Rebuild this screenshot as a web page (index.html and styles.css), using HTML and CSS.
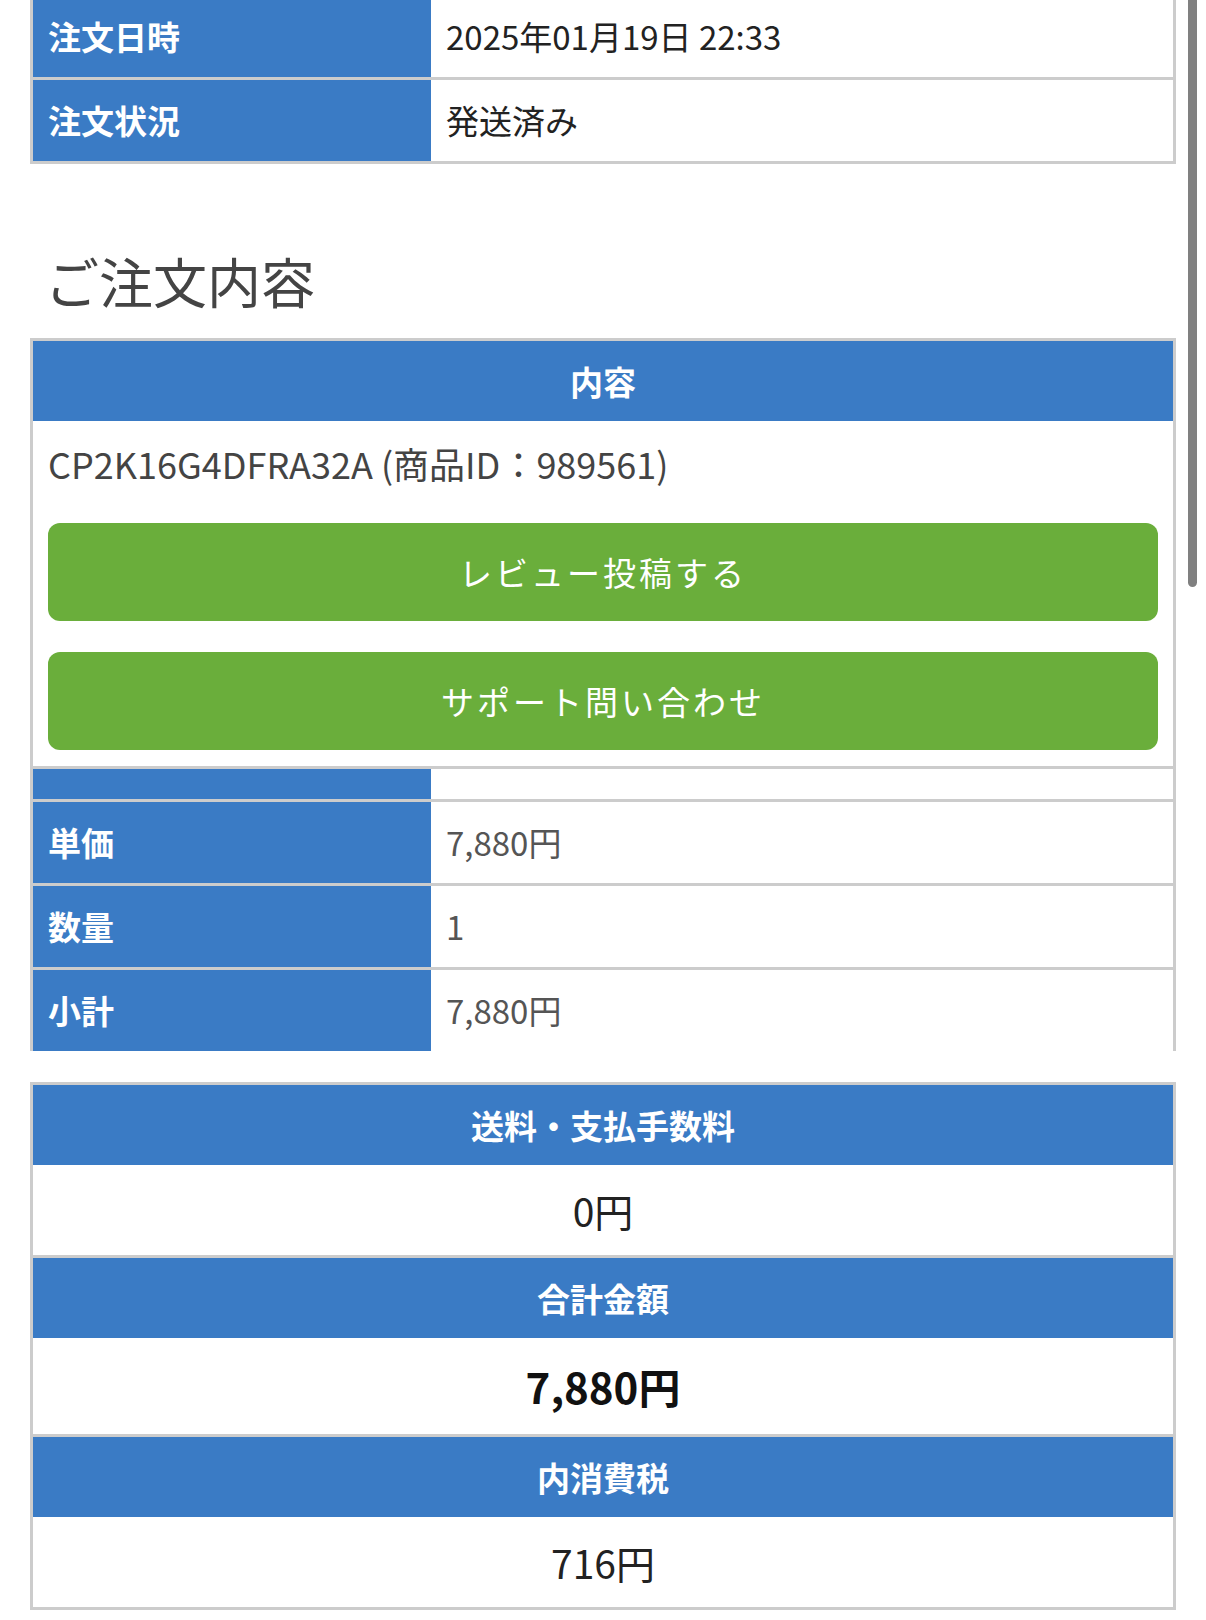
FILE: index.html
```html
<!DOCTYPE html>
<html lang="ja">
<head>
<meta charset="utf-8">
<title>ご注文内容</title>
<link rel="stylesheet" href="styles.css">
</head>
<body>
<div class="page">
  <div class="tbl">
    <div class="row">
      <div class="lbl">注文日時</div>
      <div class="val dark">2025年01月19日 22:33</div>
    </div>
    <div class="row sep">
      <div class="lbl">注文状況</div>
      <div class="val dark">発送済み</div>
    </div>
  </div>

  <h2 class="heading">ご注文内容</h2>

  <div class="tbl tbl-open">
    <div class="head">内容</div>
    <div class="content">
      <p class="product">CP2K16G4DFRA32A (商品ID：989561)</p>
      <a class="btn">レビュー投稿する</a>
      <a class="btn">サポート問い合わせ</a>
    </div>
    <div class="row sep">
      <div class="lbl"></div>
      <div class="val"></div>
    </div>
    <div class="row sep">
      <div class="lbl">単価</div>
      <div class="val">7,880円</div>
    </div>
    <div class="row sep">
      <div class="lbl">数量</div>
      <div class="val">1</div>
    </div>
    <div class="row sep">
      <div class="lbl">小計</div>
      <div class="val">7,880円</div>
    </div>
  </div>

  <div class="tbl totals">
    <div class="head">送料・支払手数料</div>
    <div class="amount">0円</div>
    <div class="head sep">合計金額</div>
    <div class="amount big">7,880円</div>
    <div class="head sep">内消費税</div>
    <div class="amount">716円</div>
  </div>
</div>
<div class="scrollbar"></div>
</body>
</html>
```

FILE: styles.css
```css
* { box-sizing: border-box; }
html, body { margin: 0; padding: 0; background: #fff; }
body {
  font-family: "Noto Sans CJK JP", "Noto Sans", sans-serif;
  font-size: 33px;
  color: #222;
}
.page {
  padding: 0 30px;
  margin-top: -7px;
}
.tbl {
  border: 3px solid #cccccc;
}
.tbl-open {
  border-bottom: 0;
}
.row {
  display: grid;
  grid-template-columns: 398px 1fr;
}
.sep {
  border-top: 3px solid #cccccc;
}
.lbl {
  background: #3a7bc5;
  color: #fff;
  font-weight: 700;
  padding: 15px;
  line-height: 51px;
}
.val {
  padding: 15px;
  line-height: 51px;
  color: #555;
}
.val.dark {
  color: #222;
}
.heading {
  margin: 76px 0 17px;
  padding-left: 15px;
  font-size: 54px;
  line-height: 81px;
  font-weight: 400;
  color: #444;
}
.head {
  background: #3a7bc5;
  color: #fff;
  font-weight: 700;
  text-align: center;
  padding: 15px;
  line-height: 50px;
}
.content {
  padding: 17px 15px 16px;
}
.product {
  margin: 0 0 35px;
  font-size: 36px;
  line-height: 50px;
  color: #444;
}
.btn {
  display: block;
  height: 98px;
  line-height: 98px;
  background: #6aae3b;
  color: #fff;
  text-align: center;
  border-radius: 12px;
  letter-spacing: 3px;
  font-weight: 400;
}
.btn + .btn {
  margin-top: 31px;
}
.totals {
  margin-top: 31px;
}
.amount {
  text-align: center;
  padding: 15px;
  font-size: 39px;
  line-height: 60px;
  color: #222;
}
.amount.big {
  font-size: 42px;
  line-height: 66px;
  font-weight: 700;
  color: #111;
}
.scrollbar {
  position: fixed;
  top: -10px;
  right: 9px;
  width: 9px;
  height: 597px;
  background: #808080;
  border-radius: 5px;
}
```
